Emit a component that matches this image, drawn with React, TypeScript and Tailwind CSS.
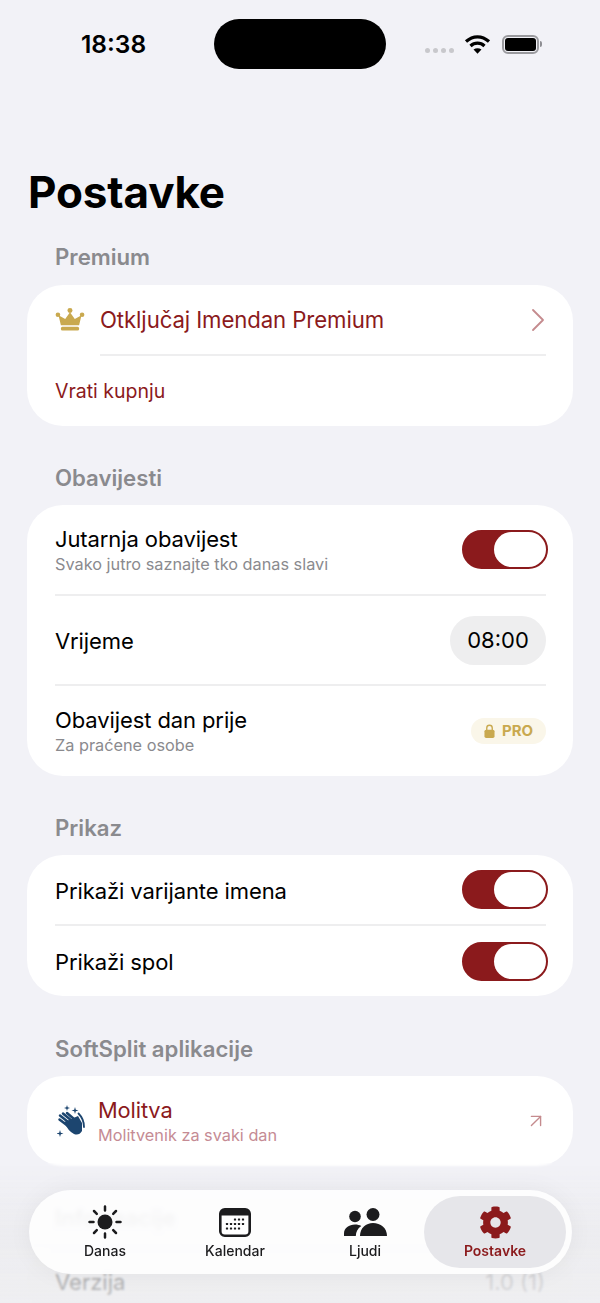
import type { ReactNode } from 'react';
import { ArrowUpRight, ChevronRight } from 'lucide-react';
import { FaCog } from 'react-icons/fa';

const SECTIONS_FONT = { fontFamily: 'Inter, "Noto Sans", sans-serif' };

function Toggle() {
  return (
    <div className="flex h-[39px] w-[86px] shrink-0 items-center justify-end rounded-full border-2 border-[#8b1a1c] bg-[#8b1a1c]">
      <div className="h-[35px] w-[52px] rounded-full bg-white" />
    </div>
  );
}

function SectionTitle({ children }: { children: ReactNode }) {
  return <h2 className="pl-7 text-[22.2px] leading-[28px] font-semibold text-[#8a8a8e]">{children}</h2>;
}

function Card({ children }: { children: ReactNode }) {
  return <div className="mt-[13px] rounded-[36px] bg-white">{children}</div>;
}

function Divider({ left = 'ml-7' }: { left?: string }) {
  return <div className={`${left} mr-[27px] h-[2px] bg-[#eeeeef]`} />;
}

function Row({
  title,
  subtitle,
  height,
  right,
}: {
  title: string;
  subtitle?: string;
  height: string;
  right: ReactNode;
}) {
  return (
    <div className={`flex items-center justify-between pr-[25px] pl-7 ${height}`}>
      <div className={subtitle ? '' : 'mt-[2px]'}>
        <div className="text-[22px] leading-[28px] tracking-[-0.1px] text-black">{title}</div>
        {subtitle && <div className="mt-px text-[16.3px] leading-[21px] text-[#8a8a8e]">{subtitle}</div>}
      </div>
      {right}
    </div>
  );
}

function Crown() {
  return (
    <svg viewBox="0 0 30 24" className="h-[23px] w-[30px]" fill="#c9a94f">
      <circle cx="15" cy="2.6" r="2.6" />
      <circle cx="2.4" cy="7" r="2.4" />
      <circle cx="27.6" cy="7" r="2.4" />
      <path d="M15 4.5 20 11.5 27 7.5 24.5 18H5.5L3 7.5 10 11.5Z" />
      <rect x="5.5" y="19.5" width="19" height="4" rx="1.6" />
    </svg>
  );
}

function Lock() {
  return (
    <svg viewBox="0 0 12 15" className="h-[14px] w-[11px]" fill="#c9a94f">
      <path d="M3 7V4.2a3 3 0 0 1 6 0V7" fill="none" stroke="#c9a94f" strokeWidth="1.5" />
      <rect x="0.5" y="6" width="11" height="9" rx="1.8" />
    </svg>
  );
}

function Hands() {
  return (
    <svg viewBox="0 0 28 32" className="h-[32px] w-[28px]" fill="#1c456f">
      <path d="M10 0l.7 2.300 2.300.7-2.300.7-.7 2.300-.7-2.300-2.300-.7 2.300-.7zM18 2l.8 2.700 2.700.8-2.700.8-.8 2.700-.8-2.700-2.700-.8 2.700-.8zM3 25l.8 2.700 2.700.8-2.700.8-.8 2.700-.8-2.700-2.700-.8 2.700-.8z" />
      <g stroke="#1c456f" strokeWidth="2.500" strokeLinecap="round" fill="none">
        <path d="M2.500 14.500 11 21" />
        <path d="M3 10.500 13 18.500" />
        <path d="M6 8.500 15 16" />
        <path d="M10 8 17 14" />
      </g>
      <path d="M7 17 12 15 21 11 25 18 25 26Q22 31 17 29 11 26 7 17Z" />
      <path d="M21.500 8.500Q27 14 27 22" stroke="#1c456f" strokeWidth="1.800" fill="none" strokeLinecap="round" />
    </svg>
  );
}

function Sun() {
  return (
    <svg viewBox="0 0 34 34" className="h-[34px] w-[34px]" fill="#1c1c1e">
      <circle cx="17" cy="17" r="7.500" />
      <g stroke="#1c1c1e" strokeWidth="2.500" strokeLinecap="round">
        <path d="M17 1.500v4M17 28.500v4M1.500 17h4M28.500 17h4M6 6l2.800 2.800M25.200 25.200 28 28M6 28l2.800-2.800M25.200 8.800 28 6" />
      </g>
    </svg>
  );
}

function CalendarIcon() {
  const dots = [
    [16, 11.500],
    [20, 11.500],
    [24, 11.500],
    [8, 16],
    [12, 16],
    [16, 16],
    [20, 16],
    [24, 16],
    [8, 20.500],
    [12, 20.500],
    [16, 20.500],
    [20, 20.500],
  ];
  return (
    <svg viewBox="0 0 32 29" className="h-[29px] w-[32px]">
      <rect x="1.300" y="1.300" width="29.400" height="26.400" rx="4.500" fill="#fff" stroke="#1c1c1e" strokeWidth="2.600" />
      <path d="M1 5.500A4.500 4.500 0 0 1 5.500 1h21A4.500 4.500 0 0 1 31 5.500V7.500H1Z" fill="#1c1c1e" />
      {dots.map(([x, y]) => (
        <rect key={`${x}-${y}`} x={x - 1.1} y={y - 1.1} width="2.200" height="2.200" rx="0.5" fill="#1c1c1e" />
      ))}
    </svg>
  );
}

function People() {
  return (
    <svg viewBox="0 0 43 28" className="h-[28px] w-[43px]" fill="#1c1c1e">
      <circle cx="11" cy="8.500" r="5.800" />
      <circle cx="29" cy="6.500" r="6.500" />
      <path d="M0 28V25.500C0 20 5 16.500 11 16.500 13.500 16.500 15.500 17 17.300 18 13.500 20.500 12 24 11.800 28Z" />
      <path d="M16 28C16 20 22 15 29 15 36.500 15 43 20 43 28Z" />
    </svg>
  );
}

function TabItem({ icon, label, active }: { icon: ReactNode; label: string; active?: boolean }) {
  return (
    <div
      className={`flex h-[72px] flex-col items-center justify-end pb-[8px] ${
        active ? 'ml-[-6px] w-[142px] rounded-full bg-[#e6e6ea]' : 'w-[130px]'
      }`}
    >
      <div className="flex h-[36px] items-center">{icon}</div>
      <div
        className={`mt-[2px] text-[14px] leading-[18px] ${
          active ? 'font-semibold text-[#8b1a1c]' : 'font-medium text-[#1c1c1e]'
        }`}
      >
        {label}
      </div>
    </div>
  );
}

function StatusBar() {
  return (
    <div className="relative flex h-[88px] items-start">
      <div className="mt-[29px] ml-[81px] text-[24.5px] leading-[30px] font-semibold text-black">18:38</div>
      <div className="absolute top-[19px] left-[214px] h-[50px] w-[172px] rounded-[25px] bg-black" />
      <div className="absolute top-[34px] left-[425px] flex items-center">
        <div className="mt-[13px] flex gap-[3px]">
          <span className="h-[5px] w-[5px] rounded-full bg-[#c8c8cc]" />
          <span className="h-[5px] w-[5px] rounded-full bg-[#c8c8cc]" />
          <span className="h-[5px] w-[5px] rounded-full bg-[#c8c8cc]" />
          <span className="h-[5px] w-[5px] rounded-full bg-[#c8c8cc]" />
        </div>
        <svg viewBox="0 0 27 20" className="ml-[10px] h-[20px] w-[27px]" fill="none" stroke="#000" strokeWidth="3.200">
          <path d="M2 7.500C9 1.200 18 1.200 25 7.500" />
          <path d="M6.500 12C10.500 8.200 16.500 8.200 20.500 12" />
          <path d="M13.500 19.800 9.500 15.500C12 13.700 15 13.700 17.500 15.500Z" fill="#000" stroke="none" />
        </svg>
        <div className="ml-[11px] flex h-[19px] w-[37px] items-center rounded-[6px] border-2 border-[#9a9a9e] p-px">
          <div className="h-full w-full rounded-[3px] bg-black" />
        </div>
        <div className="ml-[1px] h-[6px] w-[2px] rounded-r-full bg-[#8e8e93]" />
      </div>
    </div>
  );
}

export default function App() {
  return (
    <div className="relative h-[1303px] w-[600px] overflow-hidden bg-[#f2f2f7]" style={SECTIONS_FONT}>
      <StatusBar />
      <h1 className="mt-[75px] pl-7 text-[44px] leading-[58px] font-bold tracking-[-0.15px] text-black">Postavke</h1>

      <div className="mt-[22px] px-[27px]">
        <SectionTitle>Premium</SectionTitle>
        <div className="pt-px">
          <Card>
            <div className="flex h-[69px] items-center pr-[27px] pl-7">
              <Crown />
              <span className="ml-[15px] flex-1 text-[22.2px] tracking-[-0.1px] text-[#8b1a1c]">Otključaj Imendan Premium</span>
              <ChevronRight className="mr-[-12px] h-[40px] w-[40px] text-[#c58b8e]" strokeWidth={1.100} />
            </div>
            <Divider left="ml-[73px]" />
            <div className="flex h-[70px] items-center pt-px pl-7 text-[19.500px] text-[#8b1a1c]">Vrati kupnju</div>
          </Card>
        </div>

        <div className="mt-[38px]">
          <SectionTitle>Obavijesti</SectionTitle>
        </div>
        <Card>
          <Row height="h-[89px]" title="Jutarnja obavijest" subtitle="Svako jutro saznajte tko danas slavi" right={<Toggle />} />
          <Divider />
          <Row
            height="h-[88px]"
            title="Vrijeme"
            right={
              <div className="mr-[2px] flex h-[49px] w-[96px] items-center justify-center rounded-full bg-[#eeeeef] text-[22px] text-black">
                08:00
              </div>
            }
          />
          <Divider />
          <Row
            height="h-[90px]"
            title="Obavijest dan prije"
            subtitle="Za praćene osobe"
            right={
              <div className="mr-[2px] flex h-[26px] w-[75px] items-center justify-center gap-[7px] rounded-full bg-[#faf6e9]">
                <Lock />
                <span className="text-[15px] font-bold text-[#c9a94f]">PRO</span>
              </div>
            }
          />
        </Card>

        <div className="mt-[38px]">
          <SectionTitle>Prikaz</SectionTitle>
        </div>
        <Card>
          <Row height="h-[69px]" title="Prikaži varijante imena" right={<Toggle />} />
          <Divider />
          <Row height="h-[70px]" title="Prikaži spol" right={<Toggle />} />
        </Card>

        <div className="mt-[39px]">
          <SectionTitle>SoftSplit aplikacije</SectionTitle>
        </div>
        <Card>
          <div className="flex h-[90px] items-center pr-[26px] pl-[30px]">
            <Hands />
            <div className="ml-[13px] flex-1">
              <div className="text-[21.800px] leading-[28px] tracking-[-0.1px] text-[#8b1a1c]">Molitva</div>
              <div className="mt-px text-[16.300px] leading-[21px] text-[#c58b94]">Molitvenik za svaki dan</div>
            </div>
            <ArrowUpRight className="h-[22px] w-[22px] text-[#c58b8e]" strokeWidth={1.500} />
          </div>
        </Card>

        <div className="mt-[38px]">
          <SectionTitle>Informacije</SectionTitle>
        </div>
        <div className="mt-[13px] rounded-[36px] bg-[#f1f1f3]">
          <div className="flex h-[74px] items-center justify-between pr-7 pl-7 text-[22px]">
            <span className="text-black">Verzija</span>
            <span className="text-[#8a8a8e]">1.0 (1)</span>
          </div>
        </div>
      </div>

      {/* fade behind the tab bar */}
      <div className="absolute right-0 bottom-0 left-0 h-[140px] bg-gradient-to-b from-[#e9e9eb]/0 via-[#e9e9eb]/60 to-[#eeeef0]/80 backdrop-blur-[1px]" />

      <div className="absolute top-[1190px] left-[29px] flex h-[84px] w-[543px] items-center rounded-full bg-white/85 pr-[6px] pl-[11px] shadow-[0_0_24px_rgba(0,0,0,0.05)] backdrop-blur-[2px]">
        <TabItem icon={<Sun />} label="Danas" />
        <TabItem icon={<CalendarIcon />} label="Kalendar" />
        <TabItem icon={<People />} label="Ljudi" />
        <TabItem icon={<FaCog className="h-[33px] w-[33px] text-[#8b1a1c]" />} label="Postavke" active />
      </div>
    </div>
  );
}
